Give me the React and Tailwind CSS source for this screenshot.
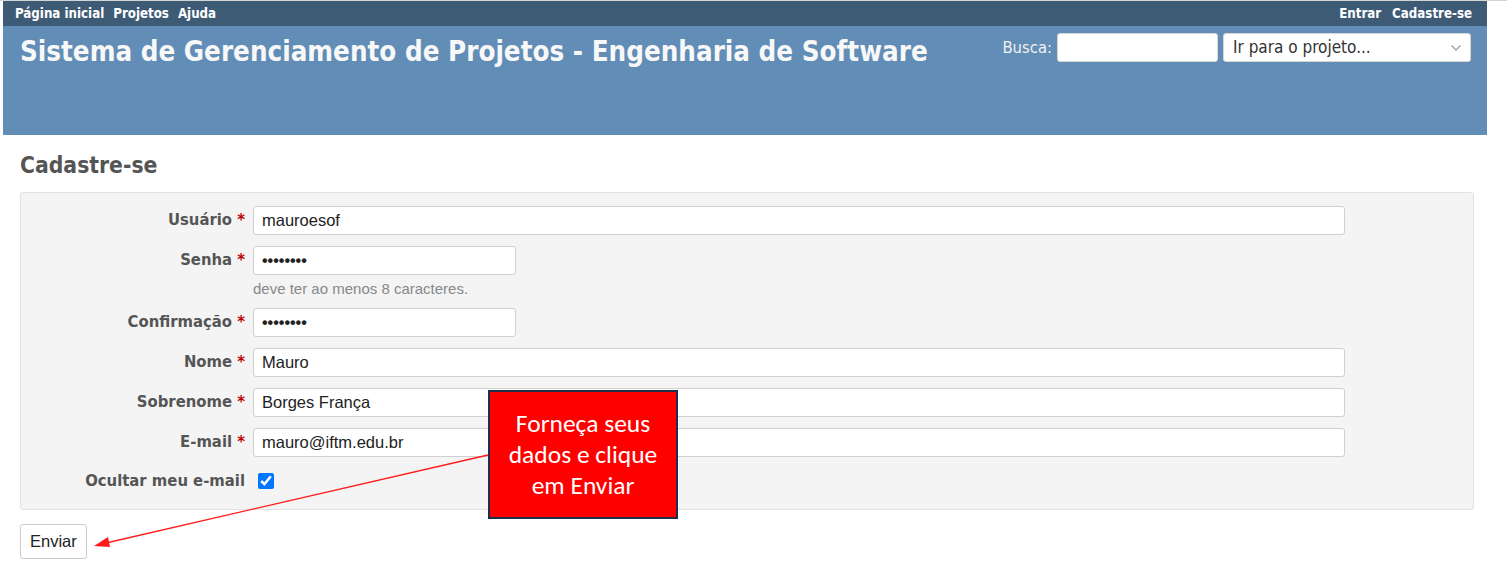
import React from "react";

const sans = { fontFamily: '"DejaVu Sans", Verdana, sans-serif' };
const arial = { fontFamily: '"Liberation Sans", Arial, sans-serif' };

function Field({ label, value, wide = true, password = false }) {
  return (
    <div className="flex items-center h-[29px]">
      <label className="w-[232px] text-right font-bold text-[16.5px] text-[#555] font-stretch-condensed pr-[8px]" style={sans}>
        {label} <span className="text-[#bb0000]">*</span>
      </label>
      <div
        className={`${wide ? "w-[1092px]" : "w-[263px]"} h-[29px] bg-white border border-[#d0d0d0] rounded-[3px] flex items-center px-[8px] text-[16.5px] text-[#222]`}
        style={arial}
      >
        {password ? <span className="text-[16px] font-bold">••••••••</span> : value}
      </div>
    </div>
  );
}

export default function App() {
  return (
    <div className="relative w-[1507px] h-[576px] bg-white overflow-hidden">
      <div className="border-t border-[#d4d4d4] pl-[3px] pr-[20px]">
        {/* top menu */}
        <div
          className="h-[25px] bg-[#3e5b76] flex items-center justify-between pl-[12px] pr-[15px] text-white font-bold text-[13.2px] font-stretch-condensed"
          style={sans}
        >
          <div className="flex gap-[9px]">
            <span>Página inicial</span>
            <span>Projetos</span>
            <span>Ajuda</span>
          </div>
          <div className="flex gap-[11px]">
            <span>Entrar</span>
            <span>Cadastre-se</span>
          </div>
        </div>
        {/* header */}
        <div className="h-[109px] bg-[#628db6] flex justify-between pl-[17px] pr-[16px]">
          <h1
            className="text-[#f8f8f8] font-bold text-[27.5px] leading-[34px] pt-[8px] font-stretch-condensed whitespace-nowrap"
            style={sans}
          >
            Sistema de Gerenciamento de Projetos - Engenharia de Software
          </h1>
          <div className="flex items-start pt-[7px]">
            <span className="text-[#f0f0f0] text-[16.5px] leading-[29px] mr-[5px] font-stretch-condensed" style={sans}>
              Busca:
            </span>
            <div className="w-[161px] h-[29px] bg-white rounded-[3px] border border-[#d6d6d6]" />
            <div
              className="ml-[5px] w-[248px] h-[29px] bg-white rounded-[3px] border border-[#d6d6d6] flex items-center justify-between pl-[9px] pr-[8px] text-[17px] text-[#333] font-stretch-condensed"
              style={sans}
            >
              <span>Ir para o projeto...</span>
              <svg width="12" height="8" viewBox="0 0 12 8" fill="none">
                <path d="M1.5 1.5 L6 6 L10.5 1.5" stroke="#a0a0a0" strokeWidth="1.3" />
              </svg>
            </div>
          </div>
        </div>
        {/* content */}
        <div className="pl-[17px] pr-[13px] pt-[16px]">
          <h2 className="text-[#555] font-bold text-[22.7px] leading-[28px] font-stretch-condensed" style={sans}>
            Cadastre-se
          </h2>
          <div className="mt-[13px] bg-[#f4f4f4] border border-[#e2e2e2] rounded-[3px] pt-[13px] pb-[18px] flex flex-col">
            <Field label="Usuário" value="mauroesof" />
            <div className="mt-[11px]">
              <Field label="Senha" wide={false} password />
            </div>
            <div className="mt-[5px] ml-[232px] text-[15px] leading-[18px] text-[#888]" style={arial}>
              deve ter ao menos 8 caracteres.
            </div>
            <div className="mt-[10px]">
              <Field label="Confirmação" wide={false} password />
            </div>
            <div className="mt-[11px]">
              <Field label="Nome" value="Mauro" />
            </div>
            <div className="mt-[11px]">
              <Field label="Sobrenome" value="Borges França" />
            </div>
            <div className="mt-[11px]">
              <Field label="E-mail" value="mauro@iftm.edu.br" />
            </div>
            <div className="mt-[14px] flex items-center h-[20px]">
              <label className="w-[232px] text-right font-bold text-[16.5px] text-[#555] font-stretch-condensed pr-[8px]" style={sans}>
                Ocultar meu e-mail
              </label>
              <input type="checkbox" defaultChecked className="ml-[5px] w-[16px] h-[16px] accent-[#0075ff]" />
            </div>
          </div>
          <button
            className="mt-[14px] h-[35px] px-[9px] bg-white border border-[#ccc] rounded-[3px] text-[16.5px] text-[#222]"
            style={arial}
          >
            Enviar
          </button>
        </div>
      </div>

      {/* arrow pointing at the submit button */}
      <svg className="absolute left-0 top-0 pointer-events-none" width="1507" height="576">
        <line x1="488" y1="455" x2="106" y2="543" stroke="#ff1a1a" strokeWidth="1.3" />
        <polygon points="94,546 108,537 110,547" fill="#ff1a1a" />
      </svg>

      {/* callout */}
      <div
        className="absolute left-[488px] top-[390px] w-[190px] h-[129px] bg-[#ff0000] border-2 border-[#1f2d4a] flex items-center justify-center text-center text-white text-[25.5px] leading-[31px]"
        style={{ fontFamily: 'Carlito, Lato, sans-serif' }}
      >
        <div>
          Forneça seus
          <br />
          dados e clique
          <br />
          em Enviar
        </div>
      </div>
    </div>
  );
}
